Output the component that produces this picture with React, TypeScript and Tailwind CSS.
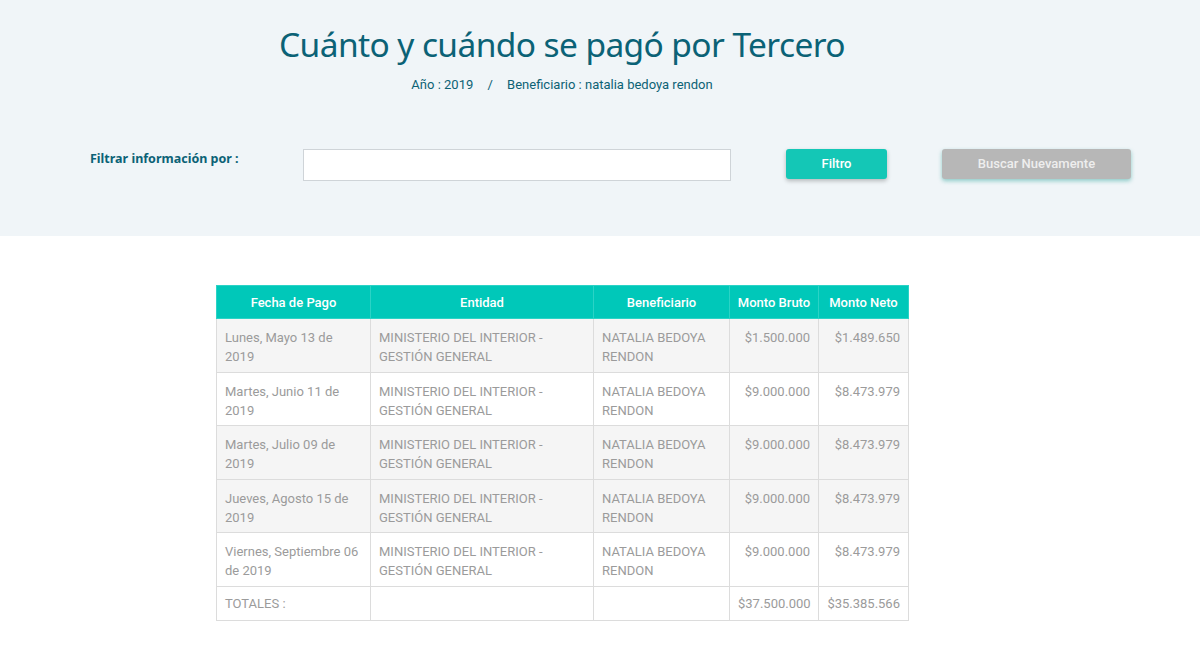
const rows = [
  { fecha: 'Lunes, Mayo 13 de 2019', bruto: '$1.500.000', neto: '$1.489.650', bg: 'bg-[#f5f5f5]' },
  { fecha: 'Martes, Junio 11 de 2019', bruto: '$9.000.000', neto: '$8.473.979', bg: 'bg-white' },
  { fecha: 'Martes, Julio 09 de 2019', bruto: '$9.000.000', neto: '$8.473.979', bg: 'bg-[#f5f5f5]' },
  { fecha: 'Jueves, Agosto 15 de 2019', bruto: '$9.000.000', neto: '$8.473.979', bg: 'bg-[#f5f5f5]' },
  { fecha: 'Viernes, Septiembre 06 de 2019', bruto: '$9.000.000', neto: '$8.473.979', bg: 'bg-white' },
];

const cell = 'border border-[#dcdcdc] px-2 pt-[9px] pb-[5.5px] align-top';
const totalCell = 'border border-[#dcdcdc] px-2 py-[7.25px] align-top';

export default function App() {
  return (
    <div className="min-h-screen bg-white font-['Roboto',sans-serif]">
      {/* cabecera */}
      <div className="h-[236px] bg-[#f0f5f8]">
        <div className="mr-[76px] flex flex-col items-center pt-[20px]">
          <h1 className="font-['Noto_Sans',sans-serif] text-[33.5px] leading-[48px] tracking-[-0.6px] text-[#0b6276]">
            Cuánto y cuándo se pagó por Tercero
          </h1>
          <div className="mt-[9px] text-[13px] leading-[16px] text-[#0d6275]">
            Año : 2019 <span className="mx-[11px]">/</span> Beneficiario : natalia bedoya rendon
          </div>
        </div>

        <div className="mt-[56px] flex items-start">
          <label className="ml-[90px] mt-[1px] w-[213px] font-['Noto_Sans',sans-serif] text-[12.5px] font-bold leading-[18px] text-[#0b6276]">
            Filtrar información por :
          </label>
          <input className="h-[32px] w-[428px] border border-[#cfd4d8] bg-white outline-none" />
          <button className="ml-[55px] h-[30px] w-[101px] rounded-[3px] bg-[#14c7b6] text-[13px] font-medium text-white shadow-[0_2px_4px_rgba(0,0,0,0.25)]">
            Filtro
          </button>
          <button className="ml-[55px] h-[30px] w-[189px] rounded-[3px] bg-[#b7b7b7] text-[13px] font-medium text-[#eeeeee] shadow-[0_2px_4px_rgba(20,150,140,0.45)]">
            Buscar Nuevamente
          </button>
        </div>
      </div>

      {/* tabla */}
      <div className="pt-[49px] pl-[216px]">
        <table className="w-[692px] table-fixed border-collapse text-[13px] leading-[19px] text-[#9b9b9b]">
          <colgroup>
            <col className="w-[154px]" />
            <col className="w-[223px]" />
            <col className="w-[136px]" />
            <col className="w-[89px]" />
            <col className="w-[90px]" />
          </colgroup>
          <thead>
            <tr className="bg-[#00c8b9] text-white">
              <th className="border border-[#2bd3c6] py-[6.5px] font-medium">Fecha de Pago</th>
              <th className="border border-[#2bd3c6] py-[6.5px] font-medium">Entidad</th>
              <th className="border border-[#2bd3c6] py-[6.5px] font-medium">Beneficiario</th>
              <th className="border border-[#2bd3c6] py-[6.5px] font-medium">Monto Bruto</th>
              <th className="border border-[#2bd3c6] py-[6.5px] font-medium">Monto Neto</th>
            </tr>
          </thead>
          <tbody>
            {rows.map((r) => (
              <tr key={r.fecha} className={r.bg}>
                <td className={cell}>{r.fecha}</td>
                <td className={cell}>MINISTERIO DEL INTERIOR - GESTIÓN GENERAL</td>
                <td className={cell}>NATALIA BEDOYA RENDON</td>
                <td className={cell + ' text-right'}>{r.bruto}</td>
                <td className={cell + ' text-right'}>{r.neto}</td>
              </tr>
            ))}
            <tr className="bg-white">
              <td className={totalCell}>TOTALES :</td>
              <td className={totalCell}></td>
              <td className={totalCell}></td>
              <td className={totalCell + ' text-right'}>$37.500.000</td>
              <td className={totalCell + ' text-right'}>$35.385.566</td>
            </tr>
          </tbody>
        </table>
      </div>
    </div>
  );
}
